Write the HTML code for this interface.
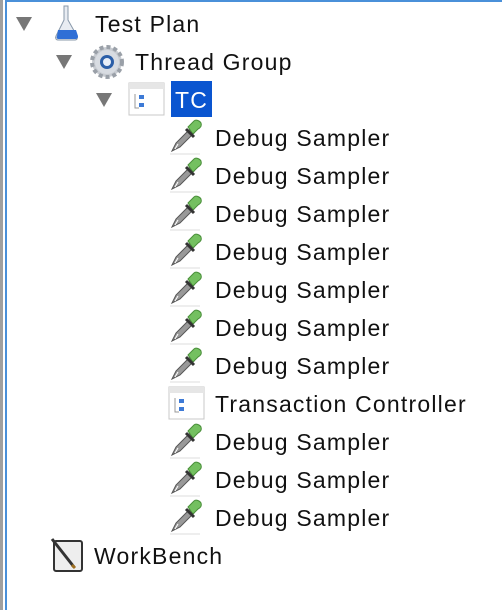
<!DOCTYPE html><html><head><style>
body{margin:0;width:502px;height:610px;background:#fff;position:relative;overflow:hidden;font-family:"Liberation Sans",sans-serif;}
.bl{position:absolute;left:0;top:0;width:3px;height:610px;background:#a0a0a0}
.bb{position:absolute;left:5px;top:0;width:2px;height:610px;background:#4a90d9}
.bt{position:absolute;left:5px;top:0;width:497px;height:2px;background:#4a90d9}
.t{position:absolute;font-size:23px;letter-spacing:1.2px;color:#111;line-height:26px;white-space:nowrap}
.tri{position:absolute;width:0;height:0;border-left:8px solid transparent;border-right:8px solid transparent;border-top:14px solid #777}
.ic{position:absolute}
</style></head><body>
<div class="bl"></div><div class="bb"></div><div class="bt"></div>

<div class="tri" style="left:16px;top:17px"></div>
<svg class="ic" style="left:52px;top:4px" width="30" height="38" viewBox="0 0 30 38"><path d="M12 2h4v14l9 16c1 2 0 4-2 4H6c-2 0-3-2-2-4l8-16z" fill="#e8ecf2" stroke="#8898aa"/><path d="M6 26h18l2 6c0 2-1 3-3 3H7c-2 0-3-1-2-3z" fill="#2f6fd6"/></svg>
<div class="t" style="left:95px;top:11px">Test Plan</div>

<div class="tri" style="left:56px;top:55px"></div>
<svg class="ic" style="left:88px;top:43px" width="38" height="38" viewBox="0 0 38 38"><circle cx="19" cy="19" r="15" fill="#c8ccd2" stroke="#9aa0a8" stroke-width="4" stroke-dasharray="4 3"/><circle cx="19" cy="19" r="12" fill="#d8dce2"/><circle cx="19" cy="19" r="7" fill="#2c5fa8"/><circle cx="19" cy="19" r="4" fill="#e8eef8"/></svg>
<div class="t" style="left:135px;top:49px">Thread Group</div>

<div class="tri" style="left:96px;top:93px"></div>
<svg class="ic" style="left:128px;top:81px" width="38" height="36" viewBox="0 0 38 36"><rect x="1" y="2" width="35" height="32" fill="#fff" stroke="#c8c8c8"/><rect x="1" y="2" width="35" height="6" fill="#e6e6e6"/><path d="M7 13v14h4" stroke="#999" fill="none"/><rect x="11" y="14" width="5" height="4" fill="#3d7ad6"/><rect x="11" y="22" width="5" height="4" fill="#3d7ad6"/></svg>
<div style="position:absolute;left:171px;top:81px;width:41px;height:36px;background:#0a55d0"></div>
<div class="t" style="left:175px;top:87px;color:#fff">TC</div>

<svg width="0" height="0" style="position:absolute"><defs><g id="dp"><path d="M4 33l4-8 14-14 4 4-14 14z" fill="#999" stroke="#555"/><path d="M7 31l3-5" stroke="#fff"/><path d="M20 9l6-6c2-2 6 0 7 2 1 3-1 5-3 6l-5 5z" fill="#74c060" stroke="#4a8f3a"/><path d="M18 11l8 8" stroke="#333" stroke-width="3"/><path d="M2 36h30" stroke="#ddd"/></g></defs></svg>

<svg class="ic" style="left:168px;top:118px" width="38" height="38"><use href="#dp"/></svg><div class="t" style="left:215px;top:125px">Debug Sampler</div>
<svg class="ic" style="left:168px;top:156px" width="38" height="38"><use href="#dp"/></svg><div class="t" style="left:215px;top:163px">Debug Sampler</div>
<svg class="ic" style="left:168px;top:194px" width="38" height="38"><use href="#dp"/></svg><div class="t" style="left:215px;top:201px">Debug Sampler</div>
<svg class="ic" style="left:168px;top:232px" width="38" height="38"><use href="#dp"/></svg><div class="t" style="left:215px;top:239px">Debug Sampler</div>
<svg class="ic" style="left:168px;top:270px" width="38" height="38"><use href="#dp"/></svg><div class="t" style="left:215px;top:277px">Debug Sampler</div>
<svg class="ic" style="left:168px;top:308px" width="38" height="38"><use href="#dp"/></svg><div class="t" style="left:215px;top:315px">Debug Sampler</div>
<svg class="ic" style="left:168px;top:346px" width="38" height="38"><use href="#dp"/></svg><div class="t" style="left:215px;top:353px">Debug Sampler</div>
<svg class="ic" style="left:168px;top:385px" width="38" height="36" viewBox="0 0 38 36"><rect x="1" y="2" width="35" height="32" fill="#fff" stroke="#c8c8c8"/><rect x="1" y="2" width="35" height="6" fill="#e6e6e6"/><path d="M7 13v14h4" stroke="#999" fill="none"/><rect x="11" y="14" width="5" height="4" fill="#3d7ad6"/><rect x="11" y="22" width="5" height="4" fill="#3d7ad6"/></svg><div class="t" style="left:215px;top:391px">Transaction Controller</div>
<svg class="ic" style="left:168px;top:422px" width="38" height="38"><use href="#dp"/></svg><div class="t" style="left:215px;top:429px">Debug Sampler</div>
<svg class="ic" style="left:168px;top:460px" width="38" height="38"><use href="#dp"/></svg><div class="t" style="left:215px;top:467px">Debug Sampler</div>
<svg class="ic" style="left:168px;top:498px" width="38" height="38"><use href="#dp"/></svg><div class="t" style="left:215px;top:505px">Debug Sampler</div>

<svg class="ic" style="left:50px;top:538px" width="36" height="36" viewBox="0 0 36 36"><rect x="4" y="3" width="28" height="30" rx="2" fill="#eee" stroke="#333" stroke-width="2"/><path d="M2 1l22 28" stroke="#333" stroke-width="3"/><path d="M22 27l3 3" stroke="#a07020" stroke-width="3"/></svg>
<div class="t" style="left:94px;top:543px">WorkBench</div>
</body></html>
